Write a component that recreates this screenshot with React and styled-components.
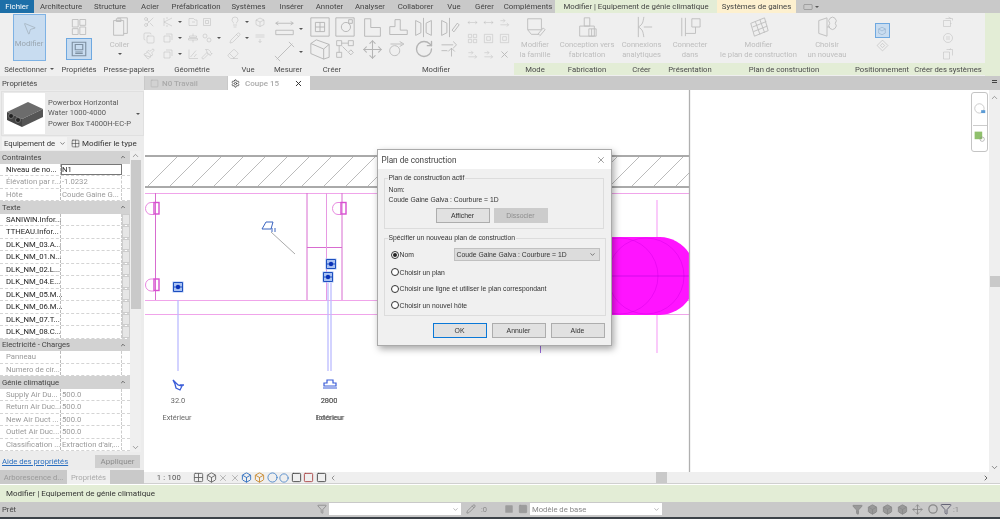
import React from "react";
import styled, { createGlobalStyle } from "styled-components";
import {
  MousePointer2, Scissors, Copy, Paintbrush, Lightbulb, Eraser, Hammer, Pencil,
  Move, RotateCw, X, ChevronDown, ChevronUp, ChevronRight, ChevronLeft, Filter,
  Box, Square, Circle, Grid2x2, Settings,
} from "lucide-react";

const Global = createGlobalStyle`
  html, body { margin: 0; padding: 0; background: #fff; }
  body { font-family: Roboto, "Liberation Sans", sans-serif; font-size: 7.7px; color: #333; }
  * { box-sizing: border-box; }
`;

const Page = styled.div`
  width: 1000px; height: 519px; overflow: hidden; display: flex; flex-direction: column;
  background: #efefef; filter: blur(0.4px);
`;

/* ---------- top tabs ---------- */
const TabBar = styled.div`
  height: 13px; flex: none; display: flex; align-items: stretch; background: #c9c9c9;
`;
const Tab = styled.div`
  width: ${p => p.$w}px; flex: none; display: flex; align-items: center; justify-content: center;
  white-space: nowrap; font-size: 7.8px; color: ${p => p.$fg || "#444"}; background: ${p => p.$bg || "transparent"};
`;

/* ---------- ribbon ---------- */
const Ribbon = styled.div`
  height: 63px; flex: none; display: flex; background: #e3edd6;
`;
const Panel = styled.div`
  width: ${p => p.$w}px; flex: none; display: flex; flex-direction: column; background: #efefef;
`;
const PanelBody = styled.div`
  height: 50px; display: flex; align-items: flex-start; justify-content: ${p => p.$just || "center"};
  padding-top: 1px; gap: ${p => p.$gap || 0}px; color: #b4b4b4;
`;
const PanelLabel = styled.div`
  height: 12px; display: flex; align-items: center; justify-content: center; white-space: nowrap;
  color: #4a4a4a; font-size: 7.7px; background: ${p => (p.$ctx ? "#e3edd6" : "#efefef")};
`;
const ModifyBtn = styled.div`
  width: 33px; height: 47px; display: flex; flex-direction: column; align-items: center; padding-top: 6px;
  gap: 3px; background: #c8dcf0; border: 1px solid #7eb2e4; color: #9aa6b0; font-size: 7.8px;
`;
const StackCol = styled.div`
  display: flex; flex-direction: column; align-items: center; gap: ${p => p.$gap || 0}px; padding-top: ${p => p.$top || 0}px;
`;
const SelectedTool = styled.div`
  width: ${p => p.$w}px; height: ${p => p.$h}px; display: flex; align-items: center; justify-content: center;
  background: #c8dcf0; border: 1px solid #6ea8e0;
`;
const BigTool = styled.div`
  width: ${p => p.$w}px; flex: none; display: flex; flex-direction: column; align-items: center; color: #bdbdbd;
  font-size: 7.6px; line-height: 10.3px; text-align: center; white-space: nowrap; padding-top: 2px;
  svg { margin-bottom: 2px; }
`;
const SmallGrid = styled.div`
  display: grid; grid-template-columns: ${p => p.$cols}; grid-auto-rows: 16px; color: #b8b8b8;
`;
const TallGrid = styled(SmallGrid)`
  grid-auto-rows: 23px; padding-top: 3px;
`;
const Cell = styled.div`
  display: flex; align-items: center; justify-content: ${p => p.$just || "center"}; gap: 2px;
`;
const Caret = styled.span`
  width: 0; height: 0; flex: none; border-left: 2px solid transparent; border-right: 2px solid transparent;
  border-top: 2.5px solid #555; margin-left: ${p => p.$ml ?? 2}px; margin-top: ${p => p.$mt || 0}px;
`;
const BigGrid = styled.div`
  display: grid; grid-template-columns: repeat(${p => p.$n}, ${p => p.$cw}px); grid-auto-rows: ${p => p.$rh}px;
  padding-top: ${p => p.$top || 0}px; margin-left: ${p => p.$ml || 0}px; color: #b4b4b4;
`;

/* ---------- main ---------- */
const Main = styled.div`
  flex: 1; min-height: 0; display: flex; background: #efefef;
`;
const Side = styled.aside`
  width: 144px; flex: none; display: flex; flex-direction: column; background: #ececec;
`;
const SideTitle = styled.div`
  height: 14px; flex: none; padding-left: 2px; display: flex; align-items: center; background: #e6e6e6; color: #444;
`;
const TypeBox = styled.div`
  height: 45px; flex: none; margin: 1px 0 0 1px; width: 143px; display: flex; align-items: center; padding: 0 3px 0 2px; gap: 3px;
  background: #eaeaea; border: 1px solid #e0e0e0;
`;
const TypeThumb = styled.div`
  width: 41px; height: 41px; flex: none; background: #fff; display: flex; align-items: center; justify-content: center;
`;
const TypeName = styled.div`
  flex: 1; color: #5a5a5a; line-height: 10.5px; font-size: 7.6px; white-space: nowrap;
`;
const FilterRow = styled.div`
  height: 15px; flex: none; display: flex; align-items: center; padding-left: 2px; gap: 4px; color: #333;
`;
const FilterSelect = styled.div`
  width: 65px; height: 13px; display: flex; align-items: center; justify-content: space-between; padding: 0 1px 0 2px;
  background: #f3f3f3; color: #333; white-space: nowrap; overflow: hidden;
`;
const TypeBtn = styled.div`
  display: flex; align-items: center; gap: 2px; white-space: nowrap; font-size: 8px;
`;
const TableWrap = styled.div`
  flex: none; height: 301px; display: flex;
`;
const Table = styled.div`
  width: 130px; flex: none; overflow: hidden;
`;
const GroupHead = styled.div`
  height: 12.5px; display: flex; align-items: center; justify-content: space-between; padding: 0 4px 0 2px;
  background: #d2d2d2; color: #444;
`;
const Row = styled.div`
  height: 12.5px; display: grid; grid-template-columns: 61px 61px 8px; background: #fff; border-bottom: 1px dashed #d4d4d4;
`;
const Label = styled.div`
  padding-left: 6px; white-space: nowrap; line-height: 11.5px; color: ${p => (p.$off ? "#999" : "#222")};
  border-right: 1px dashed #bbb;
`;
const Value = styled.div`
  padding-left: 1px; white-space: nowrap; line-height: 11.5px; color: ${p => (p.$off ? "#9a9a9a" : "#222")};
  border-right: 1px dashed #ccc;
  ${p => p.$active && "outline: 1px solid #777; outline-offset: -1px;"}
`;
const EditCell = styled.div`
  background: ${p => (p.$btn ? "#e6e6e6" : "#fff")}; border: ${p => (p.$btn ? "1px solid #ccc" : "0")};
`;
const VScroll = styled.div`
  width: 11px; flex: none; display: flex; flex-direction: column; align-items: center; background: #efefef; color: #666;
`;
const Thumb = styled.div`
  width: 10px; height: ${p => p.$h}px; background: #c9c9c9; flex: none;
`;
const Spacer = styled.div`
  flex: 1;
`;
const SideFoot = styled.div`
  height: 18px; flex: none; display: flex; align-items: center; justify-content: space-between; padding: 0 4px 0 2px;
`;
const HelpLink = styled.span`
  color: #2a6fc0; text-decoration: underline;
`;
const ApplyBtn = styled.div`
  width: 45px; height: 13px; display: flex; align-items: center; justify-content: center; background: #cfcfcf; color: #8c8c8c; font-size: 8px;
`;
const SideTabs = styled.div`
  height: 14px; flex: none; display: flex; background: #c9c9c9; color: #aaa;
`;
const SideTab = styled.div`
  width: ${p => p.$w}px; display: flex; align-items: center; justify-content: center; white-space: nowrap;
  background: ${p => (p.$on ? "#efefef" : "transparent")}; color: ${p => (p.$on ? "#aaa" : "#999")};
`;

const Work = styled.div`
  flex: 1; min-width: 0; display: flex; flex-direction: column; position: relative;
`;
const DocTabs = styled.div`
  height: 14px; flex: none; display: flex; background: #c9c9c9; padding-left: 1px; gap: 1px;
`;
const DocTab = styled.div`
  width: 82px; display: flex; align-items: center; font-weight: 500; font-size: 8px;
  gap: ${p => (p.$on ? 5 : 3)}px; padding: 0 4px 0 ${p => (p.$on ? 3 : 5)}px;
  background: ${p => (p.$on ? "#fff" : "#d2d2d2")}; color: #aaa;
`;
const DocTabClose = styled.span`
  margin-left: auto; display: flex; color: #222; padding-right: 3px;
`;
const DocMenu = styled.span`
  margin-left: auto; display: flex; flex-direction: column; gap: 1px; align-items: center; padding: 4px 3px 0 0;
  i { width: 5px; height: 1px; background: #444; display: block; }
`;
const CanvasRow = styled.div`
  flex: 1; min-height: 0; display: flex;
`;
const Canvas = styled.div`
  flex: 1; min-width: 0; background: #fff; position: relative; overflow: hidden;
  > svg { display: block; }
`;
const RightScroll = styled.div`
  width: 11px; flex: none; background: #efefef; display: flex; flex-direction: column; align-items: center; color: #666; padding-top: 3px;
`;
const ThumbGap = styled.div`
  height: ${p => p.$h}px; flex: none;
`;
const ViewBar = styled.div`
  height: 12px; flex: none; display: flex; align-items: center; background: #efefef; border-bottom: 1px solid #d0d0d0; color: #666;
`;
const Scale = styled.span`
  width: 37px; text-align: right; flex: none; color: #555; letter-spacing: .2px;
`;
const ViewIcons = styled.div`
  display: flex; align-items: center; gap: 1.6px; margin-left: 12px; width: 160px; color: #666;
`;
const HThumb = styled.div`
  width: 11px; height: 11px; background: #c9c9c9; margin-left: 303px; flex: none;
`;
const HEnd = styled.span`
  margin-left: auto; padding-right: 10px; display: flex; color: #444;
`;

/* ---------- nav widget ---------- */
const NavWheel = styled.div`
  position: absolute; right: 1px; top: 2px; width: 17px; height: 60px; border: 1px solid #c4c4c4; border-radius: 3px; background: #fff;
  display: flex; flex-direction: column; align-items: center; padding-top: 9px; color: #aaa;
`;
const NavDiv = styled.div`
  width: 14px; height: 1px; background: #ccc; margin: 9px 0 4px;
`;

/* ---------- dialog ---------- */
const Dialog = styled.div`
  position: absolute; left: 232.5px; top: 59px; width: 235px; height: 197px; background: #f0f0f0;
  border: 1px solid #aaa; box-shadow: 2px 3px 7px rgba(0,0,0,.35); display: flex; flex-direction: column; font-size: 6.8px; color: #333;
  font-family: "Liberation Sans", sans-serif;
`;
const DlgTitle = styled.div`
  height: 19px; flex: none; background: #fff; display: flex; align-items: center; justify-content: space-between; padding: 0 5px 0 4px;
  font-family: Roboto, sans-serif; font-size: 8.2px; color: #444;
`;
const DlgBody = styled.div`
  flex: 1; display: flex; flex-direction: column; padding: 9px 6px 0 6px;
`;
const Fieldset = styled.div`
  position: relative; border: 1px solid #dcdcdc; width: ${p => p.$w}px; height: ${p => p.$h}px; margin-bottom: ${p => p.$mb || 0}px; padding: ${p => p.$pad};
`;
const Legend = styled.span`
  position: absolute; left: 3px; top: -5px; padding: 0 1px; background: #f0f0f0; white-space: nowrap; font-size: 6.8px;
`;
const Line = styled.div`
  height: 10px; line-height: 10px; white-space: nowrap;
`;
const BtnRow = styled.div`
  display: flex; justify-content: flex-end; gap: ${p => p.$gap || 4}px; margin: ${p => p.$m || 0};
`;
const Btn = styled.div`
  width: 54px; height: 15px; display: flex; align-items: center; justify-content: center; font-size: 6.9px;
  background: ${p => (p.$off ? "#cccccc" : "#e1e1e1")}; color: ${p => (p.$off ? "#8d8d8d" : "#333")};
  border: 1px solid ${p => (p.$def ? "#0a78d7" : p.$off ? "#cccccc" : "#adadad")};
`;
const RadioRow = styled.div`
  display: flex; align-items: center; height: ${p => p.$h || 16.5}px; white-space: nowrap; gap: 1px;
`;
const Radio = styled.span`
  width: 8px; height: 8px; flex: none; border-radius: 50%; border: 1px solid #333; background: #fff; display: flex; align-items: center; justify-content: center;
  &::after { content: ""; width: 4px; height: 4px; border-radius: 50%; background: ${p => (p.$on ? "#222" : "transparent")}; }
`;
const DlgSelect = styled.div`
  width: 146px; height: 13px; margin-left: auto; display: flex; align-items: center; justify-content: space-between; padding: 0 3px 0 2px;
  background: #dcdcdc; border: 1px solid #c0c0c0;
`;

/* ---------- bottom ---------- */
const Hint = styled.div`
  height: 18px; flex: none; display: flex; align-items: center; padding-left: 6px; background: #e3edd6; color: #333; font-size: 8px; border-top: 1px solid #fff;
`;
const Status = styled.div`
  height: 17px; flex: none; display: flex; align-items: center; background: #c9c9c9; border-bottom: 2px solid #3c4248; color: #444; padding-bottom: 1px;
`;
const StatusText = styled.span`
  width: 314px; padding-left: 2px; flex: none;
`;
const StatusField = styled.div`
  width: ${p => p.$w}px; height: 12px; flex: none; background: #fff; color: #888; display: flex; align-items: center; justify-content: space-between; padding: 0 2px;
`;
const StatusIcon = styled.span`
  width: ${p => p.$w || 15}px; flex: none; display: flex; align-items: center; justify-content: center; color: #8a8a8a; font-size: 7.5px;
`;
const GapX = styled.span`
  width: ${p => p.$w}px; flex: none;
`;

/* ---------- icons (drawings) ---------- */
const Svg = ({ s = 14, c = "currentColor", w = 1, children, vb = "0 0 24 24" }) => (
  <svg width={s} height={s} viewBox={vb} fill="none" stroke={c} strokeWidth={w}>{children}</svg>
);
const PATHS = {
  win: "M4 3h7v9H4zM13 3h7v7h-7zM4 14h7v7H4zM13 12h7v9h-7z",
  props: "M3 3h18v18H3zM7 6h10v7H7zM7 16h10M7 18h10",
  clip: "M5 5h11v16H5zM9 2h11v17h-4M8 3h5v3H8z",
  kmark: "M4 4v16M20 4L4 12l16 8M8 4h4M8 20h4",
  doc2: "M4 5h9l3 3h4v11H4zM10 12h6",
  box3: "M5 5h14v14H5zM9 9h6v6H9z",
  shape: "M8 4h12v12M4 8h12v12H4z",
  align: "M12 3v5M12 16v5M5 8h14v3H5zM3 13h18v3H3z",
  twoC: "M8 8m-4 0a4 4 0 1 0 8 0a4 4 0 1 0-8 0M16 16m-4 0a4 4 0 1 0 8 0a4 4 0 1 0-8 0",
  chart: "M4 3v18h18M7 18L18 5M14 18l5-6",
  cube: "M4 8l8-4 8 4v9l-8 4-8-4zM4 8l8 4 8-4M12 12v9",
  lines: "M3 6h18M3 10h18M12 14v7M9 18l3 3 3-3",
  measure: "M2 6h20M2 6l3-2M2 6l3 2M22 6l-3-2M22 6l-3 2M2 14h20v5H2z",
  diag: "M3 21L21 3M1 17l6 6M17 1l6 6",
  wall: "M2 2h20v20H2zM7 7h10v10H7zM12 7v10M7 12h10",
  comp: "M2 2h20v20H2zM8 12a5 5 0 1 0 10 0a5 5 0 1 0-10 0M16 4h4v4h-4z",
  sheets: "M2 6l6-4 14 5v14l-6 2-14-6zM2 6l14 6v11M16 12l6-5",
  array: "M2 2h6v6H2zM16 2h6v6h-6zM2 16h6v6H2zM16 16l3-3 3 3-3 3zM8 5h8M5 8v8M9 9l6 6",
  align2: "M3 2v20h18V12H10V2z",
  pipeS: "M2 20h20v-5h-8V3H8v8H2z",
  mirror1: "M12 1v22M3 4l6 3v11l-6 3zM21 4l-6 3v11l6 3z",
  mirror2: "M12 1v22M3 4l6 3v11l-6 3zM15 15l6-8 2 2-6 8z",
  offset: "M8 8a6 6 0 1 0 .1 0M14 3l5 3-5 3M3 6h14",
  trim: "M3 7h14M17 3l4 4-4 4M15 21V11M11 15l4-4 4 4M3 14h7",
  arrows: "M2 12h20M2 12l4-3M2 12l4 3M22 12l-4-3M22 12l-4 3",
  gridS: "M3 3h7v7H3zM14 3h7v7h-7zM3 14h7v7H3zM14 14h7v7h-7z",
  frame: "M3 3h18v18H3zM8 8h8v8H8z",
  dash: "M3 8h10M9 4l4 4-4 4M3 17h18M17 13l4 4-4 4",
  famEdit: "M4 3h15v12H4zM4 15l4 5h9M15 20l6-7 2 2-6 7",
  fab: "M9 2h6v9H9zM4 11h16v11H4zM14 14h8v8h-8zM17 14v8",
  conn: "M8 1v22M14 1c-1 6-1 8-6 11 5 3 5 5 6 11M14 12h9",
  connect: "M3 2v20M7 2v20M14 3h9v9h-9zM18 12v7h-11",
  planeG: "M3 8l15-6 4 14-15 6zM8 6l5 14M13 4l5 14M5 12l15-6M6 17l15-6",
  pick: "M3 5l9-3v20l-9-3zM12 12h3M15 8a4 4 0 1 0 6 0a4 4 0 1 0-6 0",
  envelope: "M4 7l8-4 8 4v10l-8 4-8-4zM4 7l8 5 8-5",
  diamond: "M12 2l10 10-10 10L2 12zM8 12l4-4 4 4-4 4z",
  sysDuct: "M3 9h14v12H3zM7 5h14v4M13 2l5 3M17 15h2",
  pauseC: "M12 12m-9 0a9 9 0 1 0 18 0a9 9 0 1 0-18 0M10 8v8M14 8v8",
  sysPipe: "M3 8h12v14H3zM9 3h12v12M15 3l3-2",
};
const P = ({ n, s = 14, c, w }) => <Svg s={s} c={c} w={w}><path d={PATHS[n]} /></Svg>;

const Tool = ({ n, caret, s = 12, just }) => (
  <Cell $just={just}>{n && <P n={n} s={s} />}{caret && <Caret />}</Cell>
);

const RibbonPanel = ({ w, label, ctx, just, gap, children }) => (
  <Panel $w={w}>
    <PanelBody $just={just} $gap={gap}>{children}</PanelBody>
    <PanelLabel $ctx={ctx}>{label}</PanelLabel>
  </Panel>
);

const BigItem = ({ w, n, s = 22, lines }) => (
  <BigTool $w={w}>
    <P n={n} s={s} />
    {lines.map(l => <span key={l}>{l}</span>)}
  </BigTool>
);

const tabs = [
  ["Fichier", 34, "#1d6fa8", "#fff"], ["Architecture", 54], ["Structure", 44], ["Acier", 36],
  ["Préfabrication", 56], ["Systèmes", 49], ["Insérer", 37], ["Annoter", 39], ["Analyser", 42],
  ["Collaborer", 49], ["Vue", 28], ["Gérer", 33], ["Compléments", 54],
  ["Modifier | Equipement de génie climatique", 162, "#e3edd6"], ["Systèmes de gaines", 79, "#fdf0cf"],
];

const texte = ["SANIWIN.Infor...", "TTHEAU.Infor...", "DLK_NM_03.A...", "DLK_NM_01.N...", "DLK_NM_02.L...", "DLK_NM_04.E...", "DLK_NM_05.M...", "DLK_NM_06.M...", "DLK_NM_07.T...", "DLK_NM_08.C..."];
const genie = [["Supply Air Du...", "500.0"], ["Return Air Duc...", "500.0"], ["New Air Duct ...", "500.0"], ["Outlet Air Duc...", "500.0"], ["Classification ...", "Extraction d'air,..."]];

const Head = ({ children }) => (
  <GroupHead>{children}<ChevronUp size={6} strokeWidth={3} /></GroupHead>
);

const hatch = Array.from({ length: 25 }, (_, i) => 147 + i * 22);

const Marker = ({ x, y }) => (
  <g>
    <rect x={x - 5.5} y={y - 5.5} width="11" height="11" fill="#aac2f2" />
    <path d={`M${x - 4.5} ${y}H${x + 4.5}M${x - 4.5} ${y - 4.5}V${y + 4.5}M${x + 4.5} ${y - 4.5}V${y + 4.5}M${x - 4.5} ${y - 4.5}H${x + 4.5}M${x - 4.5} ${y + 4.5}H${x + 4.5}`} stroke="#1c4fc0" strokeWidth="1" />
    <circle cx={x} cy={y} r="2.2" fill="#0b32b8" />
  </g>
);
const Half = ({ x, y }) => (
  <g fill="none" stroke="#e88ae0">
    <path d={`M${x + 2} ${y - 6}h-3a5.5 6 0 0 0 0 12h3`} />
    <rect x={x + 2} y={y - 6} width="5" height="11.5" stroke="#d84fd0" strokeWidth="1.4" />
  </g>
);

const Drawing = () => (
  <svg width="845" height="382" viewBox="144 90 845 382">
    <defs>
      <clipPath id="view"><rect x="145" y="90" width="544" height="382" /></clipPath>
    </defs>
    <g clipPath="url(#view)">
      <path d="M145 156H689M145 187H689" stroke="#555" strokeWidth="1" />
      {hatch.map(x => <path key={x} d={`M${x} 187L${x + 31} 156`} stroke="#aaa" strokeWidth=".8" />)}
      <path d="M145 193.5H689M145 300.5H689M145 314.5H689" stroke="#f0a4ea" strokeWidth="1" />
    </g>
    <path d="M155.5 193V300M342 193V300M307 193V300M307 247.5H342" stroke="#d86cd0" strokeWidth="1" />
    <path d="M326.5 193V300" stroke="#e79ae2" strokeWidth="1" />
    <Half x={152} y={208.5} /><Half x={339} y={208.5} /><Half x={152} y={285} />
    <path d="M271 232L295 254" stroke="#aaa" strokeWidth="1" />
    <path d="M262 229l4-7h7l-2 7zM272 228v4M275 228v4" fill="none" stroke="#3a64c0" strokeWidth="1" />
    <path d="M178 300V371M328 283V371M331 283V371" stroke="#bcbcff" strokeWidth="1.3" />
    <Marker x={178} y={287} /><Marker x={331} y={264} /><Marker x={328} y={277} />
    <path d="M173 380l5 5 4 1-2 4-4-2-1-4zM180 385h4" fill="none" stroke="#3a5cd8" strokeWidth="1.3" />
    <path d="M324 386h12v-3h-3v-3h-6v3h-3zM323 388h14" fill="none" stroke="#3a5cd8" strokeWidth="1.2" />
    <path d="M540.5 300V353" stroke="#9a6cdc" strokeWidth="1" />
    <path d="M600 237H660A36 36 0 0 1 689 253V299A36 36 0 0 1 660 315H600Z" fill="#ff14ff" />
    <path d="M657 200V237M657 315V353" stroke="#f7a8f7" strokeWidth="1.2" />
    <g fill="none" stroke="#d800e8" strokeWidth=".5">
      <circle cx="646" cy="276" r="38" /><circle cx="620" cy="276" r="38" />
      <path d="M600 276H689" stroke="#a000d0" />
    </g>
    <path d="M689.5 90V472" stroke="#b0b0b0" strokeWidth="1.3" />
    <g fontFamily="Roboto, sans-serif" fontSize="7.4" fill="#666" textAnchor="middle">
      <text x="178" y="403">32.0</text>
      <text x="329" y="403">2800</text>
      <text x="329" y="403">2000</text>
      <text x="177" y="420">Extérieur</text>
      <text x="330" y="420">Extérieur</text>
      <text x="330" y="420">Intérieur</text>
    </g>
  </svg>
);

export default function App() {
  return (
    <>
      <Global />
      <Page>
        <TabBar>
          {tabs.map(([t, w, bg, fg]) => <Tab key={t} $w={w} $bg={bg} $fg={fg}>{t}</Tab>)}
          <StatusIcon $w={30}><Svg s={10} c="#666"><rect x="2" y="6" width="20" height="12" rx="2" /></Svg><Caret /></StatusIcon>
        </TabBar>

        <Ribbon>
          <RibbonPanel w={58} label={<>Sélectionner <Caret $ml={3} /></>}>
            <ModifyBtn><MousePointer2 size={15} strokeWidth={1} />Modifier</ModifyBtn>
          </RibbonPanel>
          <RibbonPanel w={42} label="Propriétés">
            <StackCol $gap={1} $top={3}>
              <P n="win" s={20} c="#bbb" />
              <SelectedTool $w={26} $h={22}><P n="props" s={18} c="#7d8fa0" w={1.5} /></SelectedTool>
            </StackCol>
          </RibbonPanel>
          <RibbonPanel w={58} label="Presse-papiers" gap={3}>
            <BigTool $w={36}>
              <P n="clip" s={22} c="#bbb" />
              <span>Coller</span>
              <Caret $ml={0} $mt={3} />
            </BigTool>
            <SmallGrid $cols="16px">
              <Cell><Scissors size={12} strokeWidth={1} /></Cell>
              <Cell><Copy size={12} strokeWidth={1} /></Cell>
              <Cell><Paintbrush size={12} strokeWidth={1} /></Cell>
            </SmallGrid>
          </RibbonPanel>
          <RibbonPanel w={68} label="Géométrie">
            <SmallGrid $cols="26px 16px 24px">
              <Tool n="kmark" caret /><Tool n="doc2" /><Tool n="box3" just="flex-start" />
              <Tool n="shape" caret /><Tool n="align" /><Tool n="twoC" caret just="flex-start" />
              <Tool n="shape" caret /><Tool n="chart" /><Cell $just="flex-start"><Hammer size={12} strokeWidth={1} /></Cell>
            </SmallGrid>
          </RibbonPanel>
          <RibbonPanel w={44} label="Vue">
            <SmallGrid $cols="24px 18px">
              <Cell><Lightbulb size={12} strokeWidth={1} /><Caret /></Cell><Tool n="cube" />
              <Cell><Pencil size={12} strokeWidth={1} /><Caret /></Cell><Tool n="lines" />
              <Cell $just="flex-start"><Eraser size={12} strokeWidth={1} /></Cell><Cell />
            </SmallGrid>
          </RibbonPanel>
          <RibbonPanel w={36} label="Mesurer">
            <TallGrid $cols="34px">
              <Cell><P n="measure" s={21} /><Caret /></Cell>
              <Cell><P n="diag" s={21} /><Caret /></Cell>
            </TallGrid>
          </RibbonPanel>
          <RibbonPanel w={52} label="Créer">
            <BigGrid $n={2} $cw={25} $rh={22} $top={2}>
              <Cell><P n="wall" s={22} /></Cell><Cell><P n="comp" s={22} /></Cell>
              <Cell><P n="sheets" s={22} /></Cell><Cell><P n="array" s={20} /></Cell>
            </BigGrid>
          </RibbonPanel>
          <RibbonPanel w={156} label="Modifier" gap={2} just="flex-start">
            <BigGrid $n={4} $cw={25.5} $rh={22} $top={2} $ml={2}>
              <Cell><P n="align2" s={21} /></Cell><Cell><P n="pipeS" s={21} /></Cell>
              <Cell><P n="mirror1" s={21} /></Cell><Cell><P n="mirror2" s={21} /></Cell>
              <Cell><Move size={21} strokeWidth={1.2} /></Cell><Cell><P n="offset" s={20} /></Cell>
              <Cell><RotateCw size={20} strokeWidth={1.6} /></Cell><Cell><P n="trim" s={20} /></Cell>
            </BigGrid>
            <SmallGrid $cols="16px 16px 16px">
              <Tool n="arrows" s={11} /><Tool n="arrows" s={11} /><Tool n="dash" s={11} />
              <Tool n="gridS" s={11} /><Tool n="frame" s={11} /><Tool n="frame" s={11} />
              <Tool n="dash" s={11} /><Tool n="dash" s={11} /><Cell><X size={11} strokeWidth={2} /></Cell>
            </SmallGrid>
          </RibbonPanel>
          <RibbonPanel w={42} ctx label="Mode"><BigItem w={42} n="famEdit" lines={["Modifier", "la famille"]} /></RibbonPanel>
          <RibbonPanel w={62} ctx label="Fabrication"><BigItem w={62} n="fab" lines={["Conception vers", "fabrication"]} /></RibbonPanel>
          <RibbonPanel w={47} ctx label="Créer"><BigItem w={47} n="conn" lines={["Connexions", "analytiques"]} /></RibbonPanel>
          <RibbonPanel w={50} ctx label="Présentation"><BigItem w={50} n="connect" lines={["Connecter", "dans"]} /></RibbonPanel>
          <RibbonPanel w={138} ctx label="Plan de construction" just="flex-start">
            <BigItem w={87} n="planeG" lines={["Modifier", "le plan de construction"]} />
            <BigItem w={50} n="pick" lines={["Choisir", "un nouveau"]} />
          </RibbonPanel>
          <RibbonPanel w={58} ctx label="Positionnement">
            <StackCol $top={9} $gap={1}>
              <SelectedTool $w={15} $h={15}><P n="envelope" s={10} c="#7a98b8" /></SelectedTool>
              <P n="diamond" s={13} />
            </StackCol>
          </RibbonPanel>
          <RibbonPanel w={74} ctx label="Créer des systèmes">
            <SmallGrid $cols="16px">
              <Tool n="sysDuct" /><Tool n="pauseC" /><Tool n="sysPipe" />
            </SmallGrid>
          </RibbonPanel>
        </Ribbon>

        <Main>
          <Side>
            <SideTitle>Propriétés</SideTitle>
            <TypeBox>
              <TypeThumb>
                <svg width="38" height="28" viewBox="0 0 38 28">
                  <path d="M1 12L22 2l15 7-21 10z" fill="#6c6c6c" />
                  <path d="M1 12l15 7v8L1 20z" fill="#444" />
                  <path d="M16 19l21-10v8L16 27z" fill="#555" />
                  <circle cx="5" cy="16" r="2.5" fill="#222" stroke="#999" strokeWidth=".6" />
                  <circle cx="12" cy="20" r="2.5" fill="#222" stroke="#999" strokeWidth=".6" />
                </svg>
              </TypeThumb>
              <TypeName>Powerbox Horizontal<br />Water 1000-4000<br />Power Box T4000H-EC-P</TypeName>
              <Caret $ml={0} />
            </TypeBox>
            <FilterRow>
              <FilterSelect>Equipement de<ChevronDown size={7} /></FilterSelect>
              <TypeBtn><Grid2x2 size={9} strokeWidth={1.4} />Modifier le type</TypeBtn>
            </FilterRow>
            <TableWrap>
              <Table>
                <Head>Contraintes</Head>
                <Row><Label>Niveau de no...</Label><Value $active>N1</Value><EditCell /></Row>
                <Row><Label $off>Élévation par r...</Label><Value $off>-1.0232</Value><EditCell /></Row>
                <Row><Label $off>Hôte</Label><Value $off>Coude Gaine G...</Value><EditCell /></Row>
                <Head>Texte</Head>
                {texte.map(t => <Row key={t}><Label>{t}</Label><Value /><EditCell $btn /></Row>)}
                <Head>Electricité - Charges</Head>
                <Row><Label $off>Panneau</Label><Value /><EditCell /></Row>
                <Row><Label $off>Numero de cir...</Label><Value /><EditCell /></Row>
                <Head>Génie climatique</Head>
                {genie.map(([a, b]) => <Row key={a}><Label $off>{a}</Label><Value $off>{b}</Value><EditCell /></Row>)}
              </Table>
              <VScroll>
                <ChevronUp size={9} strokeWidth={1.6} />
                <Thumb $h={149} />
                <Spacer />
                <ChevronDown size={9} strokeWidth={1.6} />
              </VScroll>
            </TableWrap>
            <SideFoot>
              <HelpLink>Aide des propriétés</HelpLink>
              <ApplyBtn>Appliquer</ApplyBtn>
            </SideFoot>
            <SideTabs>
              <SideTab $w={67}>Arborescence d...</SideTab>
              <SideTab $w={43} $on>Propriétés</SideTab>
            </SideTabs>
          </Side>

          <Work>
            <DocTabs>
              <DocTab><Square size={9} strokeWidth={1.2} />N0 Travail</DocTab>
              <DocTab $on><Settings size={9} color="#333" />Coupe 15<DocTabClose><X size={9} strokeWidth={2.4} /></DocTabClose></DocTab>
              <DocMenu><i /><i /></DocMenu>
            </DocTabs>
            <CanvasRow>
              <Canvas>
                <Drawing />
                <NavWheel>
                  <Svg s={14} c="#aaa"><circle cx="11" cy="11" r="8" /><rect x="14" y="14" width="7" height="5" fill="#5b9bd5" stroke="none" /></Svg>
                  <NavDiv />
                  <Svg s={13} c="#888"><rect x="3" y="3" width="14" height="14" fill="#8fc06c" stroke="none" /><circle cx="17" cy="17" r="4" /></Svg>
                </NavWheel>
                <Dialog>
                  <DlgTitle>Plan de construction<X size={10} strokeWidth={1.2} /></DlgTitle>
                  <DlgBody>
                    <Fieldset $w={220} $h={51} $mb={9} $pad="6px 4px 0">
                      <Legend>Plan de construction actif</Legend>
                      <Line>Nom:</Line>
                      <Line>Coude Gaine Galva : Courbure = 1D</Line>
                      <BtnRow $m="3px 51px 0 0"><Btn>Afficher</Btn><Btn $off>Dissocier</Btn></BtnRow>
                    </Fieldset>
                    <Fieldset $w={222} $h={78} $pad="6px 5px 0 6px">
                      <Legend>Spécifier un nouveau plan de construction</Legend>
                      <RadioRow $h={19}><Radio $on />Nom<DlgSelect>Coude Gaine Galva : Courbure = 1D<ChevronDown size={7} /></DlgSelect></RadioRow>
                      <RadioRow><Radio />Choisir un plan</RadioRow>
                      <RadioRow><Radio />Choisir une ligne et utiliser le plan correspondant</RadioRow>
                      <RadioRow><Radio />Choisir un nouvel hôte</RadioRow>
                    </Fieldset>
                    <BtnRow $m="7px 0 0 0" $gap={5}><Btn $def>OK</Btn><Btn>Annuler</Btn><Btn>Aide</Btn></BtnRow>
                  </DlgBody>
                </Dialog>
              </Canvas>
              <RightScroll>
                <ChevronUp size={9} strokeWidth={1.6} />
                <ThumbGap $h={174} />
                <Thumb $h={11} />
                <Spacer />
                <ChevronDown size={9} strokeWidth={2} />
              </RightScroll>
            </CanvasRow>
            <ViewBar>
              <Scale>1 : 100</Scale>
              <ViewIcons>
                <Grid2x2 size={11} /><Box size={11} /><X size={10} color="#aaa" /><X size={10} color="#aaa" />
                <Box size={11} color="#2f6fc0" /><Box size={11} color="#c88a30" /><Circle size={11} color="#4a86c8" /><Circle size={10} color="#4a86c8" />
                <Square size={11} color="#444" /><Square size={11} color="#a44" /><Square size={11} color="#444" /><ChevronLeft size={8} strokeWidth={2} />
              </ViewIcons>
              <HThumb />
              <HEnd><ChevronRight size={8} strokeWidth={2.4} /></HEnd>
            </ViewBar>
          </Work>
        </Main>

        <Hint>Modifier | Equipement de génie climatique</Hint>
        <Status>
          <StatusText>Prêt</StatusText>
          <StatusIcon $w={15}><Filter size={10} /></StatusIcon>
          <StatusField $w={132}><span /><ChevronDown size={7} /></StatusField>
          <StatusIcon $w={19}><Pencil size={10} /></StatusIcon>
          <StatusIcon $w={8}>:0</StatusIcon>
          <GapX $w={14} />
          <StatusIcon $w={13}><Square size={10} fill="#9c9c9c" strokeWidth={0} /></StatusIcon>
          <StatusIcon $w={15}><Square size={10} fill="#9c9c9c" strokeWidth={1} /></StatusIcon>
          <StatusField $w={132}>Modèle de base<ChevronDown size={7} /></StatusField>
          <GapX $w={188} />
          <StatusIcon><Filter size={11} fill="#999" /></StatusIcon>
          <StatusIcon><Box size={11} fill="#999" /></StatusIcon>
          <StatusIcon><Box size={11} fill="#999" /></StatusIcon>
          <StatusIcon><Box size={11} fill="#999" /></StatusIcon>
          <StatusIcon><Move size={11} /></StatusIcon>
          <StatusIcon><Circle size={10} strokeWidth={3} /></StatusIcon>
          <StatusIcon $w={12}><Filter size={12} color="#667" /></StatusIcon>
          <StatusIcon $w={8}>:1</StatusIcon>
        </Status>
      </Page>
    </>
  );
}
